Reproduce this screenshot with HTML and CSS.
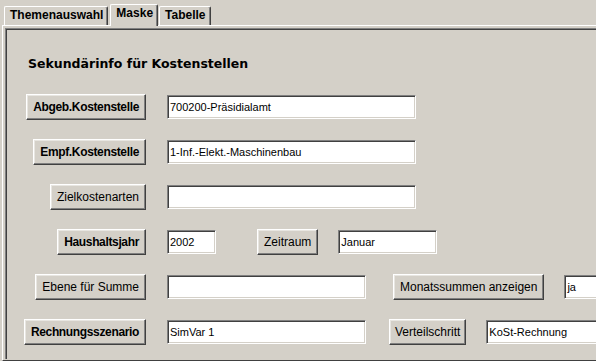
FILE: index.html
```html
<!DOCTYPE html>
<html lang="de">
<head>
<meta charset="utf-8">
<title>Maske</title>
<link rel="stylesheet" href="styles.css">
</head>
<body>
<div class="tabs">
  <div class="tab">Themenauswahl</div>
  <div class="tab active">Maske</div>
  <div class="tab">Tabelle</div>
</div>
<div class="page">
  <div class="pane">
    <h1 class="title">Sekundärinfo für Kostenstellen</h1>
    <div class="form">
      <div class="label"><button class="btn bold">Abgeb.Kostenstelle</button></div>
      <div class="field"><div class="input w-long">700200-Präsidialamt</div></div>

      <div class="label"><button class="btn bold">Empf.Kostenstelle</button></div>
      <div class="field"><div class="input w-long">1-Inf.-Elekt.-Maschinenbau</div></div>

      <div class="label"><button class="btn">Zielkostenarten</button></div>
      <div class="field"><div class="input w-long"></div></div>

      <div class="label"><button class="btn bold">Haushaltsjahr</button></div>
      <div class="field">
        <div class="input w-year">2002</div>
        <button class="btn gap-zeit">Zeitraum</button>
        <div class="input w-month gap-val">Januar</div>
      </div>

      <div class="label"><button class="btn">Ebene für Summe</button></div>
      <div class="field">
        <div class="input w-mid"></div>
        <button class="btn gap-monat">Monatssummen anzeigen</button>
        <div class="input w-ja gap-val">ja</div>
      </div>

      <div class="label"><button class="btn bold">Rechnungsszenario</button></div>
      <div class="field">
        <div class="input w-mid">SimVar 1</div>
        <button class="btn gap-verteil narrow">Verteilschritt</button>
        <div class="input w-kost gap-val">KoSt-Rechnung</div>
      </div>
    </div>
  </div>
</div>
</body>
</html>
```
FILE: styles.css
```css
html, body {
  margin: 0;
  padding: 0;
}
body {
  background: #d4d0c8;
  font-family: "Liberation Sans", Arial, sans-serif;
  color: #000;
  width: 596px;
  height: 361px;
  overflow: hidden;
}

/* tab strip */
.tabs {
  display: flex;
  align-items: flex-end;
  height: 25px;
  padding-left: 4px;
  position: relative;
  z-index: 1;
}
.tab {
  box-sizing: border-box;
  height: 19px;
  padding: 0 4px 0 5px;
  margin-right: 1px;
  border: 1px solid #fff;
  border-right-color: #404040;
  border-bottom: none;
  border-radius: 2px 2px 0 0;
  box-shadow: inset -1px 0 0 #808080;
  background: #d4d0c8;
  font-size: 12px;
  font-weight: bold;
  line-height: 17px;
  white-space: nowrap;
}
.tab.active {
  height: 22px;
  margin: 0 1px -1px 1px;
  line-height: 17px;
  padding-bottom: 3px;
}

/* tab page */
.page {
  box-sizing: border-box;
  height: 336px;
  margin-left: 2px;
  padding: 2px 0 0 2px;
  border-top: 1px solid #fff;
  border-left: 1px solid #fff;
  border-bottom: 1px solid #404040;
}
.pane {
  box-sizing: border-box;
  height: 331px;
  border-top: 1px solid #808080;
  border-left: 1px solid #808080;
  box-shadow: inset 1px 1px 0 #404040;
  padding: 2px 0 0 1px;
  overflow: hidden;
}

.title {
  margin: 25px 0 0 21px;
  font-family: "DejaVu Sans", Verdana, sans-serif;
  font-weight: bold;
  font-size: 12.5px;
  line-height: 15px;
  white-space: nowrap;
}

.form {
  margin-top: 23px;
  display: grid;
  grid-template-columns: 139px auto;
  column-gap: 21px;
  row-gap: 19px;
  align-items: center;
}
.label {
  display: flex;
  justify-content: flex-end;
}
.field {
  display: flex;
  align-items: center;
  white-space: nowrap;
}

/* 3D push button */
.btn {
  box-sizing: border-box;
  height: 26px;
  padding: 0 6px;
  margin: 0;
  background: #d4d0c8;
  border: 1px solid;
  border-color: #fff #404040 #404040 #fff;
  box-shadow: inset -1px -1px 0 #808080, inset 1px 1px 0 #e8e6e1;
  font-family: "Liberation Sans", Arial, sans-serif;
  font-size: 12px;
  color: #000;
  white-space: nowrap;
  line-height: 22px;
  flex: none;
}
.btn.bold {
  font-weight: bold;
  letter-spacing: -0.35px;
}
.btn.narrow {
  padding: 0 5px;
}

/* sunken text field */
.input {
  box-sizing: border-box;
  height: 24px;
  padding: 0 2px;
  background: #fff;
  border: 1px solid;
  border-color: #808080 #fff #fff #808080;
  box-shadow: inset 1px 1px 0 #404040, inset -1px -1px 0 #d4d0c8;
  font-size: 11px;
  line-height: 22px;
  flex: none;
  overflow: hidden;
}
.w-long { width: 249px; }
.w-mid { width: 199px; }
.w-year { width: 49px; }
.w-month { width: 99px; }
.w-ja { width: 60px; }
.w-kost { width: 130px; }

.gap-zeit { margin-left: 41px; }
.gap-monat { margin-left: 27px; }
.gap-verteil { margin-left: 23px; }
.gap-val { margin-left: 20px; }
```
